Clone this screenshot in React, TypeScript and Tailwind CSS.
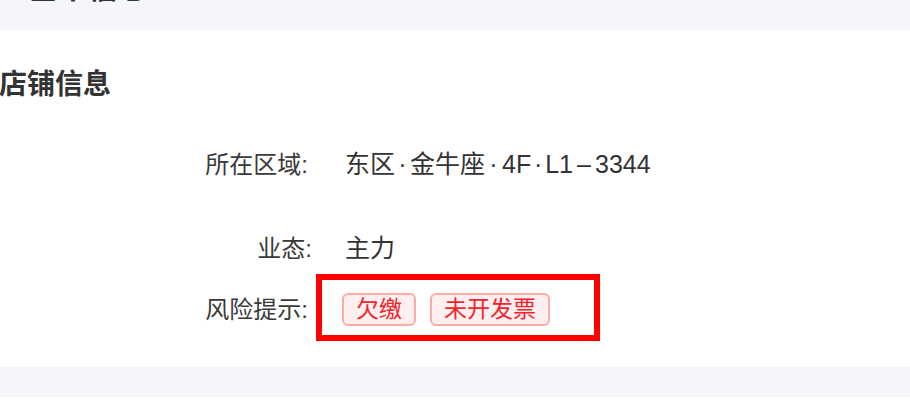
import React from "react";

const FONT = { fontFamily: '"Liberation Sans", "Noto Sans CJK SC", sans-serif' };

function Row({
  label,
  children,
  className,
  labelClass,
}: {
  label: string;
  children: React.ReactNode;
  className: string;
  labelClass: string;
}) {
  return (
    <div className={`flex items-center ${className}`}>
      <div className={`flex w-[345px] shrink-0 justify-end text-[24px] text-[#3a3a3a] ${labelClass}`}>
        <span>{label}</span>
      </div>
      <div className="flex items-center text-[25px] text-[#333333]">{children}</div>
    </div>
  );
}

function Dot({ w }: { w: string }) {
  return <span className={`inline-block text-center ${w}`}>·</span>;
}

function Tag({ text }: { text: string }) {
  return (
    <span className="inline-flex h-[33px] items-center rounded-[6px] border-2 border-[#ffaaa5] bg-[#fff0f0] px-[12px] text-[23px] leading-none text-[#f5222d]">
      {text}
    </span>
  );
}

export default function App() {
  return (
    <div className="h-[408px] w-[910px] overflow-hidden bg-white" style={FONT}>
      <div className="h-[30px] overflow-hidden bg-[#f5f6fa]">
        <div className="ml-[28px] mt-[-30px] h-[36px] text-[30px] font-bold leading-[36px] text-[#333333]">
          基本信息
        </div>
      </div>

      <div className="relative h-[337px] bg-white">
        <div className="ml-[-1px] pt-[37px] text-[28px] font-bold leading-[36px] text-[#333333]">
          店铺信息
        </div>

        <Row label="所在区域:" labelClass="pr-[37px]" className="mt-[46px] h-[32px]">
          <span>东区</span>
          <Dot w="w-[15px]" />
          <span>金牛座</span>
          <Dot w="w-[17px]" />
          <span>4F</span>
          <Dot w="w-[14px]" />
          <span>L1</span>
          <span className="inline-block w-[22px] text-center">–</span>
          <span>3344</span>
        </Row>

        <Row label="业态:" labelClass="pr-[33px]" className="mt-[52px] h-[32px]">
          <span>主力</span>
        </Row>

        <Row label="风险提示:" labelClass="pr-[37px]" className="mt-[28px] h-[33px]">
          <div className="ml-[-3px] flex gap-[14px]">
            <Tag text="欠缴" />
            <Tag text="未开发票" />
          </div>
        </Row>

        <div className="pointer-events-none absolute left-[316px] top-[244px] h-[67px] w-[284px] border-[6px] border-[#ff0000]" />
      </div>

      <div className="h-[30px] bg-[#f5f6fa]" />
      <div className="h-[11px] bg-white" />
    </div>
  );
}
